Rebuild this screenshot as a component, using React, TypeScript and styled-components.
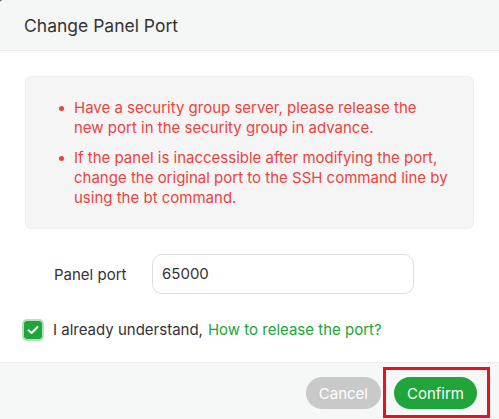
import React, { useState } from "react";
import styled, { createGlobalStyle } from "styled-components";

const GlobalStyle = createGlobalStyle`
  html, body {
    margin: 0;
    padding: 0;
    background: #6b6b6b;
  }
  * {
    box-sizing: border-box;
  }
`;

const Dialog = styled.div`
  width: 499px;
  height: 419px;
  background: #ffffff;
  border-radius: 4px 0 0 0;
  overflow: hidden;
  display: flex;
  flex-direction: column;
  font-family: Inter, "Noto Sans", sans-serif;
  color: #333333;
`;

const Header = styled.div`
  height: 51px;
  flex-shrink: 0;
  display: flex;
  align-items: center;
  padding: 0 24px;
  background: #f5f6f6;
  border-bottom: 1px solid #ebeded;
  font-size: 17.5px;
  color: #333333;
`;

const Body = styled.div`
  flex: 1;
  padding: 25px 25px 0 25px;
`;

const Alert = styled.ul`
  margin: 0;
  list-style: none;
  padding: 21px 25px 20px 48px;
  background: #f5f5f5;
  border: 1px solid #efefef;
  border-radius: 6px;
  display: flex;
  flex-direction: column;
  gap: 10px;
`;

const AlertItem = styled.li`
  position: relative;
  font-size: 15px;
  line-height: 20px;
  color: #e8443f;
  &::before {
    content: "";
    position: absolute;
    left: -15px;
    top: 8px;
    width: 5px;
    height: 5px;
    border-radius: 50%;
    background: #e8443f;
  }
`;

const FormRow = styled.div`
  display: flex;
  align-items: center;
  margin-top: 25px;
  padding-left: 29px;
`;

const Label = styled.label`
  width: 98px;
  font-size: 15px;
  color: #333333;
`;

const PortInput = styled.input`
  width: 262px;
  height: 40px;
  border: 1px solid #dcdfe2;
  border-radius: 10px;
  padding: 0 9px 2px 9px;
  font-family: Inter, "Noto Sans", sans-serif;
  font-size: 15px;
  color: #333333;
  outline: none;
  background: #ffffff;
`;

const CheckRow = styled.div`
  display: flex;
  align-items: center;
  margin-top: 26px;
  margin-left: -1px;
  font-size: 15px;
`;

const CheckBox = styled.span<{ checked: boolean }>`
  width: 18px;
  height: 18px;
  margin: 0 11px 0 0;
  border-radius: 3px;
  display: flex;
  align-items: center;
  justify-content: center;
  background: ${(p) => (p.checked ? "#20a53a" : "#ffffff")};
  border: 1px solid ${(p) => (p.checked ? "#20a53a" : "#dcdfe2")};
  box-shadow: 0 0 0 2px rgba(32, 165, 58, 0.35);
  cursor: pointer;
`;

const Link = styled.a`
  color: #20a53a;
  text-decoration: none;
  margin-left: 5px;
`;

const Footer = styled.div`
  height: 57px;
  flex-shrink: 0;
  display: flex;
  justify-content: flex-end;
  align-items: flex-start;
  gap: 13px;
  padding: 14px 22px 0 0;
  background: #f6f7f7;
  border-top: 1px solid #ebeded;
`;

const Button = styled.button<{ variant: "cancel" | "confirm" }>`
  height: 32px;
  padding: 0 13px;
  border: none;
  border-radius: 16px;
  font-family: Inter, "Noto Sans", sans-serif;
  font-size: 15px;
  color: #ffffff;
  background: ${(p) => (p.variant === "confirm" ? "#20a53a" : "#c9c9c9")};
  cursor: pointer;
`;

const ConfirmWrap = styled.div`
  position: relative;
`;

const Highlight = styled.div`
  position: absolute;
  top: -10px;
  bottom: -9px;
  left: -11px;
  right: -13px;
  border: 3px solid #e3141e;
  pointer-events: none;
`;

const App: React.FunctionComponent = () => {
  const [checked, setChecked] = useState(true);
  const [port, setPort] = useState("65000");

  return (
    <>
      <GlobalStyle />
      <Dialog>
        <Header>Change Panel Port</Header>
        <Body>
          <Alert>
            <AlertItem>
              Have a security group server, please release the new port in the
              security group in advance.
            </AlertItem>
            <AlertItem>
              If the panel is inaccessible after modifying the port, change the
              original port to the SSH command line by using the bt command.
            </AlertItem>
          </Alert>
          <FormRow>
            <Label>Panel port</Label>
            <PortInput value={port} onChange={(e) => setPort(e.target.value)} />
          </FormRow>
          <CheckRow>
            <CheckBox checked={checked} onClick={() => setChecked(!checked)}>
              {checked && (
                <svg width="12" height="10" viewBox="0 0 12 10">
                  <path
                    d="M1.5 5.2 L4.6 8 L10.5 2"
                    fill="none"
                    stroke="#ffffff"
                    strokeWidth="2"
                    strokeLinecap="round"
                    strokeLinejoin="round"
                  />
                </svg>
              )}
            </CheckBox>
            I already understand,
            <Link href="#">How to release the port?</Link>
          </CheckRow>
        </Body>
        <Footer>
          <Button variant="cancel">Cancel</Button>
          <ConfirmWrap>
            <Button variant="confirm">Confirm</Button>
            <Highlight />
          </ConfirmWrap>
        </Footer>
      </Dialog>
    </>
  );
};

export default App;
